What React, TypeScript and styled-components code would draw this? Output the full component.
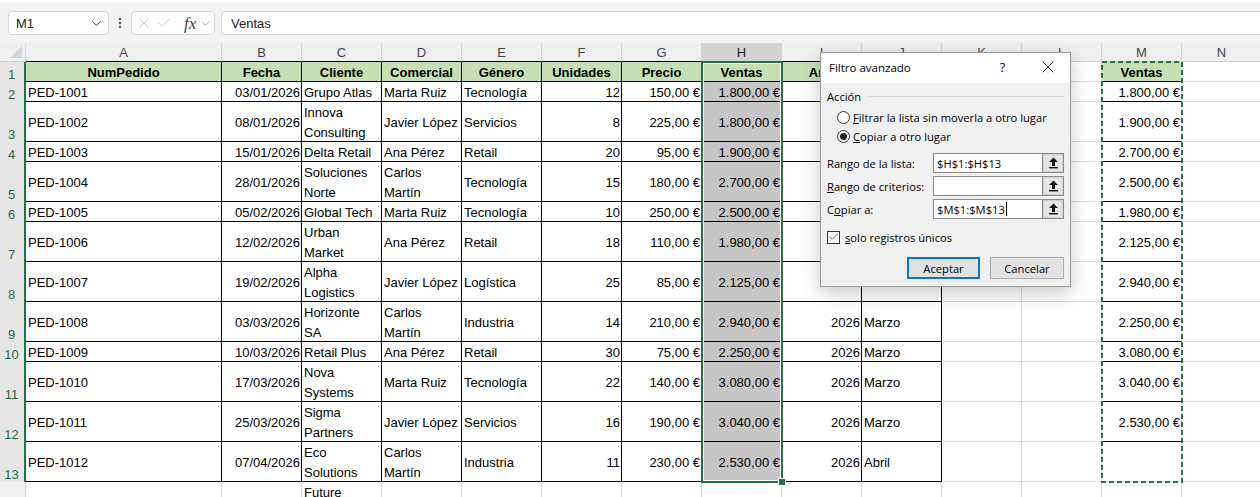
import React from 'react';
import styled, { createGlobalStyle } from 'styled-components';
import { ChevronDown, EllipsisVertical, X, Check } from 'lucide-react';

const GlobalStyle = createGlobalStyle`
  html, body { margin: 0; padding: 0; background: #fff; }
  body { font-family: "Liberation Sans", Arial, sans-serif; overflow: hidden; }
  #root { width: 1260px; height: 497px; }
`;

const GREEN = '#217346';
const GRID = '#dadada';

const Page = styled.div`
  position: relative;
  width: 1260px;
  height: 497px;
  overflow: hidden;
  display: flex;
  flex-direction: column;
  background: #fff;
`;

/* ---------- formula bar ---------- */
const TopBar = styled.div`
  height: 43px;
  flex: none;
  box-sizing: border-box;
  border-top: 2px solid #fff;
  padding: 9px 0 0 8px;
  display: flex;
  align-items: flex-start;
  background: #f3f3f3;
  font-size: 13px;
  color: #222;
`;

const NameBox = styled.div`
  width: 101px;
  height: 24px;
  box-sizing: border-box;
  border: 1px solid #d6d6d6;
  border-radius: 4px;
  background: #fff;
  display: flex;
  align-items: center;
  justify-content: space-between;
  padding: 0 4px 0 7px;
`;

const DotsSlot = styled.div`
  width: 22px;
  height: 24px;
  display: flex;
  align-items: center;
  justify-content: center;
  color: #555;
`;

const FnBox = styled.div`
  width: 84px;
  height: 24px;
  box-sizing: border-box;
  border: 1px solid #d6d6d6;
  border-radius: 4px;
  background: #fff;
  display: flex;
  align-items: center;
  padding-left: 4px;
  color: #b5b5b5;
`;

const FnGlyph = styled.span`
  font-family: "Liberation Serif", "Times New Roman", serif;
  font-style: italic;
  font-size: 17px;
  color: #404040;
  margin-left: 12px;
  line-height: 1;
`;

const FormulaInput = styled.div`
  flex: 1;
  margin-left: 6px;
  margin-right: -8px;
  height: 24px;
  box-sizing: border-box;
  border: 1px solid #d6d6d6;
  border-radius: 4px;
  background: #fff;
  display: flex;
  align-items: center;
  padding-left: 9px;
`;

/* ---------- sheet ---------- */
const Sheet = styled.div`
  position: relative;
  flex: 1;
  overflow: hidden;
`;

const Grid = styled.div<{ $rows: string }>`
  display: grid;
  grid-template-columns: 26px 196px repeat(13, 80px);
  grid-template-rows: ${p => p.$rows};
  width: max-content;
  font-size: 13px;
`;

const Corner = styled.div`
  position: relative;
  background: #efefef;
  border-bottom: 1px solid #cfcfcf;
  border-right: 1px solid #dadada;
  box-sizing: border-box;
  &::after {
    content: '';
    position: absolute;
    right: 3px;
    bottom: 3px;
    border-style: solid;
    border-width: 0 0 12px 12px;
    border-color: transparent transparent #d6d6d6 transparent;
  }
`;

const ColHead = styled.div<{ $sel?: boolean; $bottom: string }>`
  box-sizing: border-box;
  display: flex;
  align-items: center;
  justify-content: center;
  padding-top: 1px;
  background: ${p => (p.$sel ? '#d3d3d3' : '#efefef')};
  border-right: 1px solid #d4d4d4;
  border-bottom: 1px solid ${p => p.$bottom};
  color: ${p => (p.$sel ? '#1b1b1b' : '#444')};
`;

const RowHead = styled.div<{ $sel?: boolean }>`
  box-sizing: border-box;
  display: flex;
  align-items: flex-end;
  justify-content: center;
  padding-right: 1px;
  background: ${p => (p.$sel ? '#e6e6e6' : '#efefef')};
  border-right: ${p => (p.$sel ? `2px solid ${GREEN}` : '1px solid #d4d4d4')};
  color: ${p => (p.$sel ? '#1e6b41' : '#444')};
  line-height: 14px;
`;

const Cell = styled.div<{
  $align: 'left' | 'right' | 'center';
  $bg: string;
  $bold?: boolean;
  $rb: string;
  $bb: string;
}>`
  box-sizing: border-box;
  display: flex;
  align-items: center;
  justify-content: ${p =>
    p.$align === 'right' ? 'flex-end' : p.$align === 'center' ? 'center' : 'flex-start'};
  padding: ${p => (p.$align === 'right' ? '3px 1px 0 2px' : '3px 2px 0 2px')};
  background: ${p => p.$bg};
  border-right: 1px solid ${p => p.$rb};
  border-bottom: 1px solid ${p => p.$bb};
  font-weight: ${p => (p.$bold ? 700 : 400)};
  white-space: pre-line;
  line-height: 20px;
  color: #000;
  overflow: hidden;
`;

const Selection = styled.div`
  position: absolute;
  left: 701px;
  top: 18px;
  width: 82px;
  height: 422px;
  box-sizing: border-box;
  border: 2px solid ${GREEN};
  box-shadow: inset 0 0 0 1px #fff;
  pointer-events: none;
`;

const FillHandle = styled.div`
  position: absolute;
  right: -5px;
  bottom: -5px;
  width: 6px;
  height: 6px;
  background: ${GREEN};
  border: 1px solid #fff;
`;

const Marquee = styled.svg`
  position: absolute;
  left: 1101px;
  top: 18px;
  pointer-events: none;
`;

/* ---------- dialog ---------- */
const Dialog = styled.div`
  position: absolute;
  left: 820px;
  top: 52px;
  width: 251px;
  box-sizing: border-box;
  border: 1px solid #9a9a9a;
  background: #f0f0f0;
  box-shadow: 0 6px 18px rgba(0, 0, 0, 0.22);
  font-family: "Open Sans", "Noto Sans", sans-serif;
  font-size: 11.2px;
  color: #000;
`;

const TitleBar = styled.div`
  height: 30px;
  box-sizing: border-box;
  padding: 0 0 2px 8px;
  background: #fff;
  display: flex;
  align-items: center;
`;

const Title = styled.div`
  flex: 1;
  font-size: 11.5px;
`;

const TitleButton = styled.div`
  width: 45px;
  height: 28px;
  display: flex;
  align-items: center;
  justify-content: center;
  font-size: 13px;
  color: #111;
`;

const DialogBody = styled.div`
  padding: 5px 6px 7px 6px;
  display: flex;
  flex-direction: column;
`;

const GroupHeader = styled.div`
  height: 16px;
  display: flex;
  align-items: center;
  gap: 6px;
`;

const GroupRule = styled.div`
  flex: 1;
  height: 1px;
  background: #d9d9d9;
`;

const RadioList = styled.div`
  margin-top: 4px;
  padding-left: 10px;
  display: flex;
  flex-direction: column;
`;

const OptionRow = styled.div`
  height: 19px;
  display: flex;
  align-items: center;
  gap: 3px;
`;

const Radio = styled.div<{ $checked?: boolean }>`
  width: 13px;
  height: 13px;
  box-sizing: border-box;
  border-radius: 50%;
  border: 1px solid #333;
  background: #fff;
  display: flex;
  align-items: center;
  justify-content: center;
  &::after {
    content: '';
    width: 7px;
    height: 7px;
    border-radius: 50%;
    background: ${p => (p.$checked ? '#222' : 'transparent')};
  }
`;

const Fields = styled.div`
  margin-top: 7px;
  display: flex;
  flex-direction: column;
  gap: 3px;
`;

const FieldRow = styled.div`
  height: 20px;
  display: flex;
  align-items: center;
`;

const FieldLabel = styled.div`
  width: 106px;
`;

const RefBox = styled.div`
  width: 131px;
  height: 20px;
  box-sizing: border-box;
  border: 1px solid #8c8c8c;
  display: flex;
`;

const RefInput = styled.div`
  flex: 1;
  background: #fff;
  padding-left: 3px;
  display: flex;
  align-items: center;
`;

const Caret = styled.span`
  display: inline-block;
  width: 1px;
  height: 14px;
  background: #000;
  margin-left: 1px;
`;

const RefButton = styled.div`
  width: 21px;
  box-sizing: border-box;
  background: #e5e5e5;
  border-left: 1px solid #8c8c8c;
  box-shadow: inset 0 0 0 1px #cfcfcf;
  display: flex;
  align-items: center;
  justify-content: center;
`;

const CheckRow = styled.div`
  margin-top: 11px;
  height: 14px;
  display: flex;
  align-items: center;
  gap: 5px;
`;

const CheckBox = styled.div`
  width: 13px;
  height: 13px;
  box-sizing: border-box;
  border: 1px solid #333;
  background: #fff;
  display: flex;
  align-items: center;
  justify-content: center;
  color: #222;
`;

const ButtonRow = styled.div`
  margin-top: 13px;
  display: flex;
  justify-content: flex-end;
  gap: 10px;
`;

const DlgButton = styled.div<{ $primary?: boolean; $w: number }>`
  width: ${p => p.$w}px;
  height: 22px;
  box-sizing: border-box;
  background: #e1e1e1;
  border: ${p => (p.$primary ? '2px solid #0078d7' : '1px solid #adadad')};
  display: flex;
  align-items: center;
  justify-content: center;
`;

const U = styled.span`
  text-decoration: underline;
  text-underline-offset: 1px;
`;

const CollapseIcon = () => (
  <svg width="11" height="12" viewBox="0 0 11 12">
    <path d="M5.5 0.5 L10 5 H7 V9 H4 V5 H1 Z" fill="#111" />
    <rect x="1" y="10" width="9" height="1.4" fill="#111" />
  </svg>
);

/* ---------- data ---------- */
const COLS = ['A', 'B', 'C', 'D', 'E', 'F', 'G', 'H', 'I', 'J', 'K', 'L', 'M', 'N'];
const ALIGN: ('left' | 'right')[] = [
  'left', 'right', 'left', 'left', 'left', 'right', 'right', 'right', 'right', 'left', 'left', 'left', 'right', 'left',
];

type Row = { h: number; v: string[] };

const ROWS: Row[] = [
  { h: 20, v: ['NumPedido', 'Fecha', 'Cliente', 'Comercial', 'Género', 'Unidades', 'Precio', 'Ventas', 'Año', 'Mes', '', '', 'Ventas', ''] },
  { h: 20, v: ['PED-1001', '03/01/2026', 'Grupo Atlas', 'Marta Ruiz', 'Tecnología', '12', '150,00 €', '1.800,00 €', '2026', 'Enero', '', '', '1.800,00 €', ''] },
  { h: 40, v: ['PED-1002', '08/01/2026', 'Innova\nConsulting', 'Javier López', 'Servicios', '8', '225,00 €', '1.800,00 €', '2026', 'Enero', '', '', '1.900,00 €', ''] },
  { h: 20, v: ['PED-1003', '15/01/2026', 'Delta Retail', 'Ana Pérez', 'Retail', '20', '95,00 €', '1.900,00 €', '2026', 'Enero', '', '', '2.700,00 €', ''] },
  { h: 40, v: ['PED-1004', '28/01/2026', 'Soluciones\nNorte', 'Carlos\nMartín', 'Tecnología', '15', '180,00 €', '2.700,00 €', '2026', 'Enero', '', '', '2.500,00 €', ''] },
  { h: 20, v: ['PED-1005', '05/02/2026', 'Global Tech', 'Marta Ruiz', 'Tecnología', '10', '250,00 €', '2.500,00 €', '2026', 'Febrero', '', '', '1.980,00 €', ''] },
  { h: 40, v: ['PED-1006', '12/02/2026', 'Urban\nMarket', 'Ana Pérez', 'Retail', '18', '110,00 €', '1.980,00 €', '2026', 'Febrero', '', '', '2.125,00 €', ''] },
  { h: 40, v: ['PED-1007', '19/02/2026', 'Alpha\nLogistics', 'Javier López', 'Logística', '25', '85,00 €', '2.125,00 €', '2026', 'Febrero', '', '', '2.940,00 €', ''] },
  { h: 40, v: ['PED-1008', '03/03/2026', 'Horizonte\nSA', 'Carlos\nMartín', 'Industria', '14', '210,00 €', '2.940,00 €', '2026', 'Marzo', '', '', '2.250,00 €', ''] },
  { h: 20, v: ['PED-1009', '10/03/2026', 'Retail Plus', 'Ana Pérez', 'Retail', '30', '75,00 €', '2.250,00 €', '2026', 'Marzo', '', '', '3.080,00 €', ''] },
  { h: 40, v: ['PED-1010', '17/03/2026', 'Nova\nSystems', 'Marta Ruiz', 'Tecnología', '22', '140,00 €', '3.080,00 €', '2026', 'Marzo', '', '', '3.040,00 €', ''] },
  { h: 40, v: ['PED-1011', '25/03/2026', 'Sigma\nPartners', 'Javier López', 'Servicios', '16', '190,00 €', '3.040,00 €', '2026', 'Marzo', '', '', '2.530,00 €', ''] },
  { h: 40, v: ['PED-1012', '07/04/2026', 'Eco\nSolutions', 'Carlos\nMartín', 'Industria', '11', '230,00 €', '2.530,00 €', '2026', 'Abril', '', '', '', ''] },
  { h: 40, v: ['', '', 'Future\nLabs', '', '', '', '', '', '', '', '', '', '', ''] },
];

const rowTemplate = ['19px', ...ROWS.map(r => `${r.h}px`)].join(' ');

function cellStyle(r: number, c: number) {
  const inTable = r <= 13 && c <= 9;
  const rb = inTable ? '#000' : GRID;
  const bb = inTable || (c === 12 && r <= 12) ? '#000' : GRID;
  let bg = '#fff';
  if (r === 1 && (c <= 9 || c === 12)) bg = '#c6e0b4';
  if (c === 7 && r >= 2 && r <= 13) bg = '#c6c6c6';
  const align: 'left' | 'right' | 'center' = r === 1 ? 'center' : ALIGN[c];
  return { rb, bb, bg, align, bold: r === 1 };
}

export default function App() {
  return (
    <Page>
      <GlobalStyle />
      <TopBar>
        <NameBox>
          <span>M1</span>
          <ChevronDown size={15} strokeWidth={1.6} color="#333" />
        </NameBox>
        <DotsSlot>
          <EllipsisVertical size={14} strokeWidth={2.2} />
        </DotsSlot>
        <FnBox>
          <X size={16} strokeWidth={1.2} />
          <Check size={16} strokeWidth={1.2} style={{ marginLeft: 4 }} />
          <FnGlyph>fx</FnGlyph>
          <ChevronDown size={13} strokeWidth={1.4} color="#888" style={{ marginLeft: 3 }} />
        </FnBox>
        <FormulaInput>Ventas</FormulaInput>
      </TopBar>

      <Sheet>
        <Grid $rows={rowTemplate}>
          <Corner />
          {COLS.map((c, i) => (
            <ColHead key={c} $sel={c === 'H'} $bottom={i <= 9 ? '#000' : '#cfcfcf'}>
              {c}
            </ColHead>
          ))}
          {ROWS.map((row, ri) => {
            const r = ri + 1;
            return (
              <React.Fragment key={r}>
                <RowHead $sel={r <= 13}>{r}</RowHead>
                {row.v.map((val, ci) => {
                  const s = cellStyle(r, ci);
                  return (
                    <Cell key={ci} $align={s.align} $bg={s.bg} $bold={s.bold} $rb={s.rb} $bb={s.bb}>
                      {val}
                    </Cell>
                  );
                })}
              </React.Fragment>
            );
          })}
        </Grid>

        <Selection>
          <FillHandle />
        </Selection>

        <Marquee width="82" height="422" viewBox="0 0 82 422">
          <rect x="1" y="1" width="80" height="420" fill="none" stroke={GREEN} strokeWidth="2" strokeDasharray="5 3" />
        </Marquee>
      </Sheet>

      <Dialog>
        <TitleBar>
          <Title>Filtro avanzado</Title>
          <TitleButton>?</TitleButton>
          <TitleButton>
            <X size={20} strokeWidth={1} />
          </TitleButton>
        </TitleBar>
        <DialogBody>
          <GroupHeader>
            <span>Acción</span>
            <GroupRule />
          </GroupHeader>
          <RadioList>
            <OptionRow>
              <Radio />
              <span>
                <U>F</U>iltrar la lista sin moverla a otro lugar
              </span>
            </OptionRow>
            <OptionRow>
              <Radio $checked />
              <span>
                <U>C</U>opiar a otro lugar
              </span>
            </OptionRow>
          </RadioList>
          <Fields>
            <FieldRow>
              <FieldLabel>
                Ran<U>g</U>o de la lista:
              </FieldLabel>
              <RefBox>
                <RefInput>$H$1:$H$13</RefInput>
                <RefButton>
                  <CollapseIcon />
                </RefButton>
              </RefBox>
            </FieldRow>
            <FieldRow>
              <FieldLabel>
                <U>R</U>ango de criterios:
              </FieldLabel>
              <RefBox>
                <RefInput />
                <RefButton>
                  <CollapseIcon />
                </RefButton>
              </RefBox>
            </FieldRow>
            <FieldRow>
              <FieldLabel>
                C<U>o</U>piar a:
              </FieldLabel>
              <RefBox>
                <RefInput>
                  $M$1:$M$13
                  <Caret />
                </RefInput>
                <RefButton>
                  <CollapseIcon />
                </RefButton>
              </RefBox>
            </FieldRow>
          </Fields>
          <CheckRow>
            <CheckBox>
              <Check size={12} strokeWidth={1.6} />
            </CheckBox>
            <span>
              <U>s</U>olo registros únicos
            </span>
          </CheckRow>
          <ButtonRow>
            <DlgButton $primary $w={73}>Aceptar</DlgButton>
            <DlgButton $w={74}>Cancelar</DlgButton>
          </ButtonRow>
        </DialogBody>
      </Dialog>
    </Page>
  );
}
